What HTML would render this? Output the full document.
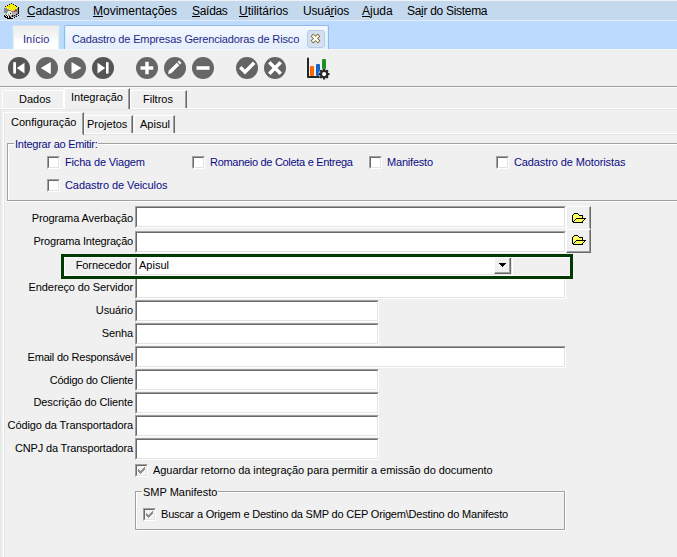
<!DOCTYPE html>
<html><head><meta charset="utf-8">
<style>
html,body{margin:0;padding:0}
body{width:677px;height:557px;overflow:hidden;position:relative;background:#f0f0f0;font-family:"Liberation Sans",sans-serif;font-size:11px;color:#000}
.a{position:absolute}
.t{position:absolute;white-space:nowrap;font-size:11px;line-height:13px}
.m{position:absolute;white-space:nowrap;font-size:12px;line-height:14px;top:4px}
.m u{text-decoration:none;border-bottom:1px solid #000;display:inline-block;line-height:10px}
.lbl{position:absolute;white-space:nowrap;font-size:11px;line-height:13px;right:544px;text-align:right;letter-spacing:-0.1px}
.fld{position:absolute;left:135px;height:22px;background:#fff;box-sizing:border-box;border-top:1px solid #a0a0a0;border-left:1px solid #a0a0a0;border-right:1px solid #fff;border-bottom:1px solid #fff}
.fld:before{content:"";position:absolute;left:0;top:0;right:0;bottom:0;border-top:1px solid #696969;border-left:1px solid #696969;border-right:1px solid #e3e3e3;border-bottom:1px solid #e3e3e3}
.cb{position:absolute;width:13px;height:13px;box-sizing:border-box;background:#fff;border-top:1px solid #a0a0a0;border-left:1px solid #a0a0a0;border-right:1px solid #fff;border-bottom:1px solid #fff}
.cb:before{content:"";position:absolute;left:0;top:0;right:0;bottom:0;border-top:1px solid #696969;border-left:1px solid #696969;border-right:1px solid #e3e3e3;border-bottom:1px solid #e3e3e3}
.circ{position:absolute;top:57px;width:22px;height:22px;border-radius:50%;background:#5c5c5c}
.circ svg{position:absolute;left:0;top:0}
.blue{color:#0c0c84}
</style></head><body>

<!-- menu bar -->
<div class="a" style="left:0;top:0;width:677px;height:1px;background:#eef2f6"></div>
<div class="a" style="left:0;top:1px;width:677px;height:19px;background:#c5d9ee"></div>
<div class="a" style="left:0;top:20px;width:677px;height:1px;background:#e4eaf2"></div>
<div class="m" style="left:27px;letter-spacing:-0.2px"><u>C</u>adastros</div>
<div class="m" style="left:93px"><u>M</u>ovimentações</div>
<div class="m" style="left:192px;letter-spacing:-0.3px"><u>S</u>aídas</div>
<div class="m" style="left:239px"><u>U</u>tilitários</div>
<div class="m" style="left:303px;letter-spacing:-0.15px">Usuá<u>r</u>ios</div>
<div class="m" style="left:362px"><u>A</u>juda</div>
<div class="m" style="left:407px;letter-spacing:-0.3px">Sa<u>i</u>r do Sistema</div>


<!-- app icon -->
<svg class="a" style="left:3px;top:2px" width="18" height="18" viewBox="0 0 18 18" shape-rendering="crispEdges"><rect x="8" y="1" width="1" height="1" fill="#000"/><rect x="6" y="2" width="1" height="1" fill="#000"/><rect x="7" y="2" width="3" height="1" fill="#f4f000"/><rect x="10" y="2" width="1" height="1" fill="#000"/><rect x="4" y="3" width="1" height="1" fill="#000"/><rect x="5" y="3" width="7" height="1" fill="#f4f000"/><rect x="12" y="3" width="1" height="1" fill="#000"/><rect x="2" y="4" width="1" height="1" fill="#000"/><rect x="3" y="4" width="3" height="1" fill="#f4f000"/><rect x="6" y="4" width="1" height="1" fill="#a0a0a0"/><rect x="7" y="4" width="6" height="1" fill="#f4f000"/><rect x="13" y="4" width="1" height="1" fill="#000"/><rect x="1" y="5" width="1" height="1" fill="#e8e8e8"/><rect x="2" y="5" width="13" height="1" fill="#f4f000"/><rect x="15" y="5" width="1" height="1" fill="#000"/><rect x="1" y="6" width="3" height="1" fill="#8a8a8a"/><rect x="4" y="6" width="1" height="1" fill="#e8e8e8"/><rect x="5" y="6" width="9" height="1" fill="#f4f000"/><rect x="14" y="6" width="1" height="1" fill="#8a8a8a"/><rect x="15" y="6" width="1" height="1" fill="#000"/><rect x="1" y="7" width="5" height="1" fill="#8a8a8a"/><rect x="6" y="7" width="2" height="1" fill="#f4f000"/><rect x="8" y="7" width="1" height="1" fill="#d0d0c0"/><rect x="9" y="7" width="3" height="1" fill="#f4f000"/><rect x="12" y="7" width="3" height="1" fill="#8a8a8a"/><rect x="15" y="7" width="1" height="1" fill="#000"/><rect x="1" y="8" width="7" height="1" fill="#8a8a8a"/><rect x="8" y="8" width="3" height="1" fill="#f4f000"/><rect x="11" y="8" width="1" height="1" fill="#8a8a8a"/><rect x="12" y="8" width="2" height="1" fill="#f01010"/><rect x="14" y="8" width="1" height="1" fill="#8a8a8a"/><rect x="15" y="8" width="1" height="1" fill="#000"/><rect x="1" y="9" width="4" height="1" fill="#8a8a8a"/><rect x="5" y="9" width="3" height="1" fill="#e8e8e8"/><rect x="8" y="9" width="3" height="1" fill="#8a8a8a"/><rect x="11" y="9" width="1" height="1" fill="#f01010"/><rect x="12" y="9" width="3" height="1" fill="#8a8a8a"/><rect x="15" y="9" width="1" height="1" fill="#000"/><rect x="1" y="10" width="3" height="1" fill="#8a8a8a"/><rect x="4" y="10" width="5" height="1" fill="#e8e8e8"/><rect x="9" y="10" width="1" height="1" fill="#8a8a8a"/><rect x="10" y="10" width="4" height="1" fill="#b4b4b4"/><rect x="14" y="10" width="1" height="1" fill="#8a8a8a"/><rect x="15" y="10" width="1" height="1" fill="#000"/><rect x="1" y="11" width="2" height="1" fill="#e8e8e8"/><rect x="3" y="11" width="1" height="1" fill="#10e010"/><rect x="4" y="11" width="3" height="1" fill="#e8e8e8"/><rect x="7" y="11" width="1" height="1" fill="#000"/><rect x="8" y="11" width="1" height="1" fill="#e8e8e8"/><rect x="9" y="11" width="4" height="1" fill="#b4b4b4"/><rect x="13" y="11" width="2" height="1" fill="#8a8a8a"/><rect x="15" y="11" width="1" height="1" fill="#000"/><rect x="1" y="12" width="1" height="1" fill="#e8e8e8"/><rect x="2" y="12" width="1" height="1" fill="#8a8a8a"/><rect x="3" y="12" width="2" height="1" fill="#e8e8e8"/><rect x="5" y="12" width="1" height="1" fill="#8a8a8a"/><rect x="6" y="12" width="3" height="1" fill="#e8e8e8"/><rect x="9" y="12" width="4" height="1" fill="#b4b4b4"/><rect x="13" y="12" width="1" height="1" fill="#000"/><rect x="14" y="12" width="1" height="1" fill="#8a8a8a"/><rect x="1" y="13" width="1" height="1" fill="#000"/><rect x="2" y="13" width="1" height="1" fill="#e8e8e8"/><rect x="3" y="13" width="1" height="1" fill="#000"/><rect x="4" y="13" width="1" height="1" fill="#e8e8e8"/><rect x="5" y="13" width="2" height="1" fill="#8a8a8a"/><rect x="7" y="13" width="1" height="1" fill="#e8e8e8"/><rect x="8" y="13" width="1" height="1" fill="#8a8a8a"/><rect x="9" y="13" width="1" height="1" fill="#000"/><rect x="10" y="13" width="1" height="1" fill="#8a8a8a"/><rect x="11" y="13" width="1" height="1" fill="#000"/><rect x="12" y="13" width="2" height="1" fill="#8a8a8a"/><rect x="15" y="13" width="1" height="1" fill="#000"/><rect x="1" y="14" width="2" height="1" fill="#000"/><rect x="3" y="14" width="1" height="1" fill="#e8e8e8"/><rect x="4" y="14" width="1" height="1" fill="#000"/><rect x="5" y="14" width="1" height="1" fill="#e8e8e8"/><rect x="6" y="14" width="1" height="1" fill="#000"/><rect x="7" y="14" width="2" height="1" fill="#8a8a8a"/><rect x="9" y="14" width="1" height="1" fill="#000"/><rect x="10" y="14" width="3" height="1" fill="#8a8a8a"/><rect x="13" y="14" width="1" height="1" fill="#000"/><rect x="2" y="15" width="3" height="1" fill="#000"/><rect x="5" y="15" width="1" height="1" fill="#e8e8e8"/><rect x="6" y="15" width="2" height="1" fill="#000"/><rect x="11" y="15" width="1" height="1" fill="#000"/><rect x="4" y="16" width="6" height="1" fill="#000"/></svg>
<!-- tab strip -->
<div class="a" style="left:0;top:21px;width:677px;height:28px;background:#bcdafe"></div>
<div class="a" style="left:0;top:49px;width:677px;height:1px;background:#f6f6f6"></div>


<!-- document tabs -->
<div class="a" style="left:12px;top:25px;width:48px;height:24px;box-sizing:border-box;border:1px solid #d6dde6;border-bottom:none;border-radius:2px 2px 0 0;background:linear-gradient(#eeeeee,#f6f6f6 50%,#ffffff 62%)"></div>
<div class="a" style="left:13px;top:27px;width:1px;height:22px;background:#c8f4ff"></div>
<div class="a" style="left:58px;top:27px;width:1px;height:22px;background:#c8f4ff"></div>
<div class="t" style="left:23px;top:33px;color:#1e2a88">Início</div>
<div class="a" style="left:64px;top:25px;width:265px;height:24px;box-sizing:border-box;border:1px solid #90b8ea;border-bottom:none;border-radius:2px 2px 0 0;background:linear-gradient(#f4f8fe,#e4eefc)"></div>
<div class="a" style="left:65px;top:27px;width:1px;height:22px;background:#d0f4ff"></div>
<div class="a" style="left:327px;top:27px;width:1px;height:22px;background:#d0f4ff"></div>
<div class="t" style="left:72px;top:33px;color:#1e2a88;letter-spacing:-0.15px">Cadastro de Empresas Gerenciadoras de Risco</div>
<div class="a" style="left:307px;top:30px;width:18px;height:18px;box-sizing:border-box;border:1px solid #b6cce6;border-radius:3px;background:#d2e0f2"></div>
<svg class="a" style="left:307px;top:30px" width="18" height="18" viewBox="0 0 18 18">
<path d="M6.3,6.3 L10.7,10.7 M10.7,6.3 L6.3,10.7" stroke="#7a6a30" stroke-width="3.8" stroke-linecap="square"/>
<path d="M6.3,6.3 L10.7,10.7 M10.7,6.3 L6.3,10.7" stroke="#ffffff" stroke-width="2.2" stroke-linecap="square"/>
</svg>
<!-- toolbar -->
<div class="a" style="left:0;top:86px;width:677px;height:1px;background:#a0a0a0"></div>
<div class="a" style="left:0;top:87px;width:677px;height:1px;background:#fcfcfc"></div>


<!-- toolbar icons -->
<svg class="a" style="left:8px;top:57px" width="22" height="22" viewBox="0 0 22 22"><circle cx="11" cy="11" r="11" fill="#555"/><rect x="5.2" y="5.2" width="2.8" height="11.4" fill="#fff"/><polygon points="8.8,11 16.5,5.8 16.5,16.4" fill="#fff"/></svg>
<svg class="a" style="left:36px;top:57px" width="22" height="22" viewBox="0 0 22 22"><circle cx="11" cy="11" r="11" fill="#666"/><polygon points="4.8,11 14.8,5 14.8,17.2" fill="#fff"/></svg>
<svg class="a" style="left:64px;top:57px" width="22" height="22" viewBox="0 0 22 22"><circle cx="11" cy="11" r="11" fill="#666"/><polygon points="17.5,11 7.5,5 7.5,17" fill="#fff"/></svg>
<svg class="a" style="left:92px;top:57px" width="22" height="22" viewBox="0 0 22 22"><circle cx="11" cy="11" r="11" fill="#555"/><rect x="14" y="5.2" width="2.6" height="11.4" fill="#fff"/><polygon points="13.2,11 5.5,5.8 5.5,16.4" fill="#fff"/></svg>
<svg class="a" style="left:136px;top:57px" width="22" height="22" viewBox="0 0 22 22"><circle cx="11" cy="11" r="11" fill="#666"/><rect x="4.5" y="9.3" width="12.8" height="3.4" fill="#fff"/><rect x="9.3" y="4.8" width="3.4" height="12.4" fill="#fff"/></svg>
<svg class="a" style="left:164px;top:57px" width="22" height="22" viewBox="0 0 22 22"><circle cx="11" cy="11" r="11" fill="#666"/><polygon points="4.1,16.9 4.73,13.73 12.83,5.63 15.37,8.17 7.27,16.27" fill="#fff"/><polygon points="13.5,5 15,3.5 17.5,6 16,7.5" fill="#fff"/></svg>
<svg class="a" style="left:192px;top:57px" width="22" height="22" viewBox="0 0 22 22"><circle cx="11" cy="11" r="11" fill="#666"/><rect x="4.5" y="9.2" width="13" height="3.6" fill="#fff"/></svg>
<svg class="a" style="left:236px;top:57px" width="22" height="22" viewBox="0 0 22 22"><circle cx="11" cy="11" r="11" fill="#646464"/><polyline points="5.5,11.5 9,15 17,7" fill="none" stroke="#fff" stroke-width="3.4" stroke-linecap="square"/></svg>
<svg class="a" style="left:264px;top:57px" width="22" height="22" viewBox="0 0 22 22"><circle cx="11" cy="11" r="11" fill="#646464"/><path d="M6.5,6.5 L15.5,15.5 M15.5,6.5 L6.5,15.5" stroke="#fff" stroke-width="3.4" stroke-linecap="square"/></svg>
<svg class="a" style="left:304px;top:54px" width="32" height="30" viewBox="0 0 32 30">
<path d="M4,4.5 L4,23 L16,23" fill="none" stroke="#262626" stroke-width="2" stroke-linecap="round" stroke-linejoin="round"/>
<rect x="6" y="12" width="4" height="10" rx="1" fill="#ff6600"/>
<rect x="12" y="10" width="4" height="12" rx="1" fill="#1464c8"/>
<rect x="18" y="5" width="4" height="11" rx="1" fill="#209020"/>
<g transform="translate(20.1,20.1)"><circle r="5.8" fill="#f0f0f0" opacity="0.6"/><circle r="4.1" fill="#262626"/><g stroke="#262626" stroke-width="2.2"><path d="M0,-5.4 V5.4 M-5.4,0 H5.4 M-3.8,-3.8 L3.8,3.8 M3.8,-3.8 L-3.8,3.8"/></g><circle r="2.1" fill="#fff"/></g>
</svg>

<!-- tab rows -->
<div class="a" style="left:0;top:88px;width:677px;height:469px;background:#f0f0f0"></div>
<div class="a" style="left:0px;top:109px;width:1px;height:448px;background:#e3e3e3"></div>
<div class="a" style="left:0px;top:108px;width:677px;height:1px;background:#fff"></div>
<div class="a" style="left:1px;top:109px;width:676px;height:1px;background:#e6e6e6"></div>
<!-- Dados -->
<div class="a" style="left:2px;top:90px;width:62px;height:18px;box-sizing:border-box;border-left:1px solid #fff;border-top:1px solid #fff;border-right:1px solid #fff"></div>
<div class="t" style="left:19px;top:93px">Dados</div>
<!-- Integracao selected -->
<div class="a" style="left:64px;top:88px;width:66px;height:21px;background:#f0f0f0;box-sizing:border-box;border-left:1px solid #fff;border-top:1px solid #fff;border-right:1px solid #696969"></div>
<div class="a" style="left:128px;top:89px;width:1px;height:20px;background:#a0a0a0"></div>
<div class="t" style="left:71px;top:91px">Integração</div>
<!-- Filtros -->
<div class="a" style="left:130px;top:90px;width:57px;height:18px;box-sizing:border-box;border-left:1px solid #fff;border-top:1px solid #fff;border-right:1px solid #696969"></div>
<div class="a" style="left:185px;top:91px;width:1px;height:17px;background:#a0a0a0"></div>
<div class="t" style="left:143px;top:93px">Filtros</div>

<!-- inner page -->
<div class="a" style="left:3px;top:133px;width:674px;height:1px;background:#fff"></div>
<div class="a" style="left:3px;top:133px;width:1px;height:424px;background:#fff"></div>
<div class="a" style="left:4px;top:134px;width:673px;height:1px;background:#e3e3e3"></div>
<!-- Configuracao selected -->
<div class="a" style="left:3px;top:112px;width:81px;height:23px;background:#f0f0f0;box-sizing:border-box;border-left:1px solid #fff;border-top:1px solid #fff;border-right:1px solid #696969"></div>
<div class="a" style="left:82px;top:113px;width:1px;height:21px;background:#a0a0a0"></div>
<div class="t" style="left:11px;top:116px">Configuração</div>
<div class="a" style="left:4px;top:114px;width:1px;height:443px;background:#e6e6e6"></div>
<!-- Projetos -->
<div class="a" style="left:84px;top:115px;width:49px;height:18px;box-sizing:border-box;border-left:1px solid #fff;border-top:1px solid #fff;border-right:1px solid #696969"></div>
<div class="a" style="left:131px;top:116px;width:1px;height:17px;background:#a0a0a0"></div>
<div class="t" style="left:87px;top:118px">Projetos</div>
<!-- Apisul -->
<div class="a" style="left:134px;top:115px;width:41px;height:18px;box-sizing:border-box;border-left:1px solid #fff;border-top:1px solid #fff;border-right:1px solid #696969"></div>
<div class="a" style="left:173px;top:116px;width:1px;height:17px;background:#a0a0a0"></div>
<div class="t" style="left:140px;top:118px">Apisul</div>

<!-- group box 1 -->
<div class="a" style="left:7px;top:143px;width:670px;height:58px;box-sizing:border-box;border-left:1px solid #a0a0a0;border-top:1px solid #a0a0a0;border-bottom:1px solid #a0a0a0"></div>
<div class="a" style="left:8px;top:144px;width:669px;height:1px;background:#fff"></div>
<div class="a" style="left:8px;top:144px;width:1px;height:56px;background:#fff"></div>
<div class="a" style="left:7px;top:201px;width:670px;height:1px;background:#fff"></div>
<div class="t blue" style="left:14px;top:138px;background:#f0f0f0;padding:0 1px;letter-spacing:-0.26px">Integrar ao Emitir:</div>
<div class="cb" style="left:47px;top:156px"></div>
<div class="t blue" style="left:65px;top:156px;letter-spacing:-0.17px">Ficha de Viagem</div>
<div class="cb" style="left:192px;top:156px"></div>
<div class="t blue" style="left:210px;top:156px;letter-spacing:-0.3px">Romaneio de Coleta e Entrega</div>
<div class="cb" style="left:369px;top:156px"></div>
<div class="t blue" style="left:387px;top:156px;letter-spacing:-0.2px">Manifesto</div>
<div class="cb" style="left:496px;top:156px"></div>
<div class="t blue" style="left:514px;top:156px;letter-spacing:-0.11px">Cadastro de Motoristas</div>
<div class="cb" style="left:47px;top:179px"></div>
<div class="t blue" style="left:65px;top:179px;letter-spacing:-0.08px">Cadastro de Veiculos</div>
<!-- labels -->
<div class="lbl" style="top:212px">Programa Averbação</div>
<div class="lbl" style="top:235px;letter-spacing:-0.2px">Programa Integração</div>
<div class="lbl" style="top:259px;right:546px">Fornecedor</div>
<div class="lbl" style="top:281px">Endereço do Servidor</div>
<div class="lbl" style="top:304px">Usuário</div>
<div class="lbl" style="top:327px">Senha</div>
<div class="lbl" style="top:351px;letter-spacing:-0.2px">Email do Responsável</div>
<div class="lbl" style="top:374px;letter-spacing:-0.25px">Código do Cliente</div>
<div class="lbl" style="top:396px">Descrição do Cliente</div>
<div class="lbl" style="top:419px">Código da Transportadora</div>
<div class="lbl" style="top:442px;letter-spacing:-0.17px">CNPJ da Transportadora</div>

<!-- fields -->
<div class="fld" style="top:206px;width:431px"></div>
<div class="fld" style="top:231px;width:431px"></div>
<div class="fld" style="top:277px;width:431px"></div>
<div class="fld" style="top:300px;width:244px"></div>
<div class="fld" style="top:323px;width:244px"></div>
<div class="fld" style="top:346px;width:431px"></div>
<div class="fld" style="top:369px;width:244px"></div>
<div class="fld" style="top:392px;width:244px"></div>
<div class="fld" style="top:415px;width:244px"></div>
<div class="fld" style="top:438px;width:244px"></div>


<!-- combo fornecedor -->
<div class="fld" style="top:254px;width:378px;height:22px"></div>
<div class="t" style="left:139px;top:259px">Apisul</div>
<div class="a" style="left:494px;top:257px;width:17px;height:17px;box-sizing:border-box;background:#f0f0f0;border-left:1px solid #fff;border-top:1px solid #fff;border-right:1px solid #696969;border-bottom:1px solid #696969"></div>
<div class="a" style="left:509px;top:258px;width:1px;height:15px;background:#a0a0a0"></div>
<div class="a" style="left:495px;top:272px;width:15px;height:1px;background:#a0a0a0"></div>
<svg class="a" style="left:499px;top:263px" width="7" height="4" viewBox="0 0 7 4" shape-rendering="crispEdges"><rect x="0" y="0" width="7" height="1" fill="#000"/><rect x="1" y="1" width="5" height="1" fill="#000"/><rect x="2" y="2" width="3" height="1" fill="#000"/><rect x="3" y="3" width="1" height="1" fill="#000"/></svg>
<div class="a" style="left:61px;top:254px;width:512px;height:25px;box-sizing:border-box;border:3px solid #003a00"></div>
<div class="a" style="left:64px;top:257px;width:506px;height:19px;box-sizing:border-box;border:1px solid #fff;border-right:none;border-left-color:#fafafa"></div>

<!-- folder buttons -->
<div class="a" style="left:566px;top:206px;width:25px;height:23px;box-sizing:border-box;background:#f0f0f0;border-left:1px solid #fff;border-top:1px solid #fff;border-right:1px solid #696969"></div>
<div class="a" style="left:589px;top:207px;width:1px;height:21px;background:#a0a0a0"></div>

<div class="a" style="left:566px;top:229px;width:25px;height:24px;box-sizing:border-box;background:#f0f0f0;border-left:1px solid #fff;border-top:1px solid #fff;border-right:1px solid #696969;border-bottom:1px solid #696969"></div>
<div class="a" style="left:589px;top:230px;width:1px;height:22px;background:#a0a0a0"></div>
<div class="a" style="left:567px;top:251px;width:23px;height:1px;background:#a0a0a0"></div>
<svg class="a" style="left:572px;top:213px" width="14" height="10" viewBox="0 0 14 10" shape-rendering="crispEdges"><rect x="2" y="0" width="4" height="1" fill="#000"/><rect x="1" y="1" width="1" height="1" fill="#000"/><rect x="2" y="1" width="1" height="1" fill="#ffff00"/><rect x="3" y="1" width="1" height="1" fill="#ffffc0"/><rect x="4" y="1" width="1" height="1" fill="#ffff00"/><rect x="5" y="1" width="1" height="1" fill="#ffffc0"/><rect x="6" y="1" width="1" height="1" fill="#000"/><rect x="0" y="2" width="1" height="1" fill="#000"/><rect x="1" y="2" width="1" height="1" fill="#ffff00"/><rect x="2" y="2" width="1" height="1" fill="#ffffc0"/><rect x="3" y="2" width="1" height="1" fill="#ffff00"/><rect x="4" y="2" width="1" height="1" fill="#ffffc0"/><rect x="5" y="2" width="1" height="1" fill="#ffff00"/><rect x="6" y="2" width="1" height="1" fill="#ffffc0"/><rect x="7" y="2" width="4" height="1" fill="#000"/><rect x="0" y="3" width="1" height="1" fill="#000"/><rect x="1" y="3" width="1" height="1" fill="#ffffc0"/><rect x="2" y="3" width="1" height="1" fill="#ffff00"/><rect x="3" y="3" width="1" height="1" fill="#ffffc0"/><rect x="4" y="3" width="1" height="1" fill="#ffff00"/><rect x="5" y="3" width="1" height="1" fill="#ffffc0"/><rect x="6" y="3" width="1" height="1" fill="#ffff00"/><rect x="7" y="3" width="1" height="1" fill="#ffffc0"/><rect x="8" y="3" width="1" height="1" fill="#ffff00"/><rect x="9" y="3" width="1" height="1" fill="#ffffc0"/><rect x="10" y="3" width="1" height="1" fill="#000"/><rect x="0" y="4" width="1" height="1" fill="#000"/><rect x="1" y="4" width="1" height="1" fill="#ffff00"/><rect x="2" y="4" width="1" height="1" fill="#ffffc0"/><rect x="3" y="4" width="1" height="1" fill="#ffff00"/><rect x="4" y="4" width="1" height="1" fill="#ffffc0"/><rect x="5" y="4" width="1" height="1" fill="#ffff00"/><rect x="6" y="4" width="1" height="1" fill="#ffffc0"/><rect x="7" y="4" width="1" height="1" fill="#ffff00"/><rect x="8" y="4" width="1" height="1" fill="#ffffc0"/><rect x="9" y="4" width="1" height="1" fill="#ffff00"/><rect x="10" y="4" width="1" height="1" fill="#000"/><rect x="0" y="5" width="1" height="1" fill="#000"/><rect x="1" y="5" width="1" height="1" fill="#ffffc0"/><rect x="2" y="5" width="1" height="1" fill="#ffff00"/><rect x="3" y="5" width="1" height="1" fill="#ffffc0"/><rect x="4" y="5" width="10" height="1" fill="#000"/><rect x="0" y="6" width="1" height="1" fill="#000"/><rect x="1" y="6" width="1" height="1" fill="#ffff00"/><rect x="2" y="6" width="1" height="1" fill="#ffffc0"/><rect x="3" y="6" width="1" height="1" fill="#000"/><rect x="4" y="6" width="1" height="1" fill="#ffff00"/><rect x="5" y="6" width="1" height="1" fill="#ffffc0"/><rect x="6" y="6" width="1" height="1" fill="#ffff00"/><rect x="7" y="6" width="1" height="1" fill="#ffffc0"/><rect x="8" y="6" width="1" height="1" fill="#ffff00"/><rect x="9" y="6" width="1" height="1" fill="#ffffc0"/><rect x="10" y="6" width="1" height="1" fill="#ffff00"/><rect x="11" y="6" width="1" height="1" fill="#ffffc0"/><rect x="12" y="6" width="1" height="1" fill="#000"/><rect x="0" y="7" width="1" height="1" fill="#000"/><rect x="1" y="7" width="1" height="1" fill="#ffffc0"/><rect x="2" y="7" width="1" height="1" fill="#000"/><rect x="3" y="7" width="1" height="1" fill="#ffffc0"/><rect x="4" y="7" width="1" height="1" fill="#ffff00"/><rect x="5" y="7" width="1" height="1" fill="#ffffc0"/><rect x="6" y="7" width="1" height="1" fill="#ffff00"/><rect x="7" y="7" width="1" height="1" fill="#ffffc0"/><rect x="8" y="7" width="1" height="1" fill="#ffff00"/><rect x="9" y="7" width="1" height="1" fill="#ffffc0"/><rect x="10" y="7" width="1" height="1" fill="#ffff00"/><rect x="11" y="7" width="1" height="1" fill="#000"/><rect x="0" y="8" width="2" height="1" fill="#000"/><rect x="2" y="8" width="1" height="1" fill="#ffffc0"/><rect x="3" y="8" width="1" height="1" fill="#ffff00"/><rect x="4" y="8" width="1" height="1" fill="#ffffc0"/><rect x="5" y="8" width="1" height="1" fill="#ffff00"/><rect x="6" y="8" width="1" height="1" fill="#ffffc0"/><rect x="7" y="8" width="1" height="1" fill="#ffff00"/><rect x="8" y="8" width="1" height="1" fill="#ffffc0"/><rect x="9" y="8" width="1" height="1" fill="#ffff00"/><rect x="10" y="8" width="1" height="1" fill="#000"/><rect x="1" y="9" width="10" height="1" fill="#000"/></svg>
<svg class="a" style="left:572px;top:235px" width="14" height="10" viewBox="0 0 14 10" shape-rendering="crispEdges"><rect x="2" y="0" width="4" height="1" fill="#000"/><rect x="1" y="1" width="1" height="1" fill="#000"/><rect x="2" y="1" width="1" height="1" fill="#ffff00"/><rect x="3" y="1" width="1" height="1" fill="#ffffc0"/><rect x="4" y="1" width="1" height="1" fill="#ffff00"/><rect x="5" y="1" width="1" height="1" fill="#ffffc0"/><rect x="6" y="1" width="1" height="1" fill="#000"/><rect x="0" y="2" width="1" height="1" fill="#000"/><rect x="1" y="2" width="1" height="1" fill="#ffff00"/><rect x="2" y="2" width="1" height="1" fill="#ffffc0"/><rect x="3" y="2" width="1" height="1" fill="#ffff00"/><rect x="4" y="2" width="1" height="1" fill="#ffffc0"/><rect x="5" y="2" width="1" height="1" fill="#ffff00"/><rect x="6" y="2" width="1" height="1" fill="#ffffc0"/><rect x="7" y="2" width="4" height="1" fill="#000"/><rect x="0" y="3" width="1" height="1" fill="#000"/><rect x="1" y="3" width="1" height="1" fill="#ffffc0"/><rect x="2" y="3" width="1" height="1" fill="#ffff00"/><rect x="3" y="3" width="1" height="1" fill="#ffffc0"/><rect x="4" y="3" width="1" height="1" fill="#ffff00"/><rect x="5" y="3" width="1" height="1" fill="#ffffc0"/><rect x="6" y="3" width="1" height="1" fill="#ffff00"/><rect x="7" y="3" width="1" height="1" fill="#ffffc0"/><rect x="8" y="3" width="1" height="1" fill="#ffff00"/><rect x="9" y="3" width="1" height="1" fill="#ffffc0"/><rect x="10" y="3" width="1" height="1" fill="#000"/><rect x="0" y="4" width="1" height="1" fill="#000"/><rect x="1" y="4" width="1" height="1" fill="#ffff00"/><rect x="2" y="4" width="1" height="1" fill="#ffffc0"/><rect x="3" y="4" width="1" height="1" fill="#ffff00"/><rect x="4" y="4" width="1" height="1" fill="#ffffc0"/><rect x="5" y="4" width="1" height="1" fill="#ffff00"/><rect x="6" y="4" width="1" height="1" fill="#ffffc0"/><rect x="7" y="4" width="1" height="1" fill="#ffff00"/><rect x="8" y="4" width="1" height="1" fill="#ffffc0"/><rect x="9" y="4" width="1" height="1" fill="#ffff00"/><rect x="10" y="4" width="1" height="1" fill="#000"/><rect x="0" y="5" width="1" height="1" fill="#000"/><rect x="1" y="5" width="1" height="1" fill="#ffffc0"/><rect x="2" y="5" width="1" height="1" fill="#ffff00"/><rect x="3" y="5" width="1" height="1" fill="#ffffc0"/><rect x="4" y="5" width="10" height="1" fill="#000"/><rect x="0" y="6" width="1" height="1" fill="#000"/><rect x="1" y="6" width="1" height="1" fill="#ffff00"/><rect x="2" y="6" width="1" height="1" fill="#ffffc0"/><rect x="3" y="6" width="1" height="1" fill="#000"/><rect x="4" y="6" width="1" height="1" fill="#ffff00"/><rect x="5" y="6" width="1" height="1" fill="#ffffc0"/><rect x="6" y="6" width="1" height="1" fill="#ffff00"/><rect x="7" y="6" width="1" height="1" fill="#ffffc0"/><rect x="8" y="6" width="1" height="1" fill="#ffff00"/><rect x="9" y="6" width="1" height="1" fill="#ffffc0"/><rect x="10" y="6" width="1" height="1" fill="#ffff00"/><rect x="11" y="6" width="1" height="1" fill="#ffffc0"/><rect x="12" y="6" width="1" height="1" fill="#000"/><rect x="0" y="7" width="1" height="1" fill="#000"/><rect x="1" y="7" width="1" height="1" fill="#ffffc0"/><rect x="2" y="7" width="1" height="1" fill="#000"/><rect x="3" y="7" width="1" height="1" fill="#ffffc0"/><rect x="4" y="7" width="1" height="1" fill="#ffff00"/><rect x="5" y="7" width="1" height="1" fill="#ffffc0"/><rect x="6" y="7" width="1" height="1" fill="#ffff00"/><rect x="7" y="7" width="1" height="1" fill="#ffffc0"/><rect x="8" y="7" width="1" height="1" fill="#ffff00"/><rect x="9" y="7" width="1" height="1" fill="#ffffc0"/><rect x="10" y="7" width="1" height="1" fill="#ffff00"/><rect x="11" y="7" width="1" height="1" fill="#000"/><rect x="0" y="8" width="2" height="1" fill="#000"/><rect x="2" y="8" width="1" height="1" fill="#ffffc0"/><rect x="3" y="8" width="1" height="1" fill="#ffff00"/><rect x="4" y="8" width="1" height="1" fill="#ffffc0"/><rect x="5" y="8" width="1" height="1" fill="#ffff00"/><rect x="6" y="8" width="1" height="1" fill="#ffffc0"/><rect x="7" y="8" width="1" height="1" fill="#ffff00"/><rect x="8" y="8" width="1" height="1" fill="#ffffc0"/><rect x="9" y="8" width="1" height="1" fill="#ffff00"/><rect x="10" y="8" width="1" height="1" fill="#000"/><rect x="1" y="9" width="10" height="1" fill="#000"/></svg>

<!-- bottom checkbox -->
<div class="cb" style="left:135px;top:464px;background:#f4f4f4"></div>
<svg class="a" style="left:138px;top:467px" width="7" height="7" viewBox="0 0 7 7" shape-rendering="crispEdges"><rect x="6" y="0" width="1" height="1" fill="#8d8d8d"/><rect x="5" y="1" width="2" height="1" fill="#8d8d8d"/><rect x="0" y="2" width="1" height="1" fill="#8d8d8d"/><rect x="4" y="2" width="3" height="1" fill="#8d8d8d"/><rect x="0" y="3" width="2" height="1" fill="#8d8d8d"/><rect x="3" y="3" width="3" height="1" fill="#8d8d8d"/><rect x="0" y="4" width="5" height="1" fill="#8d8d8d"/><rect x="1" y="5" width="3" height="1" fill="#8d8d8d"/><rect x="2" y="6" width="1" height="1" fill="#8d8d8d"/></svg>
<div class="t" style="left:153px;top:464px;letter-spacing:-0.06px">Aguardar retorno da integração para permitir a emissão do documento</div>

<!-- SMP group -->
<div class="a" style="left:135px;top:491px;width:430px;height:39px;box-sizing:border-box;border:1px solid #a0a0a0;border-right-color:#a0a0a0"></div>
<div class="a" style="left:136px;top:492px;width:428px;height:37px;box-sizing:border-box;border-left:1px solid #fff;border-top:1px solid #fff"></div>
<div class="a" style="left:135px;top:530px;width:431px;height:1px;background:#fff"></div>
<div class="a" style="left:565px;top:491px;width:1px;height:40px;background:#fff"></div>
<div class="t" style="left:142px;top:486px;background:#f0f0f0;padding:0 1px">SMP Manifesto</div>
<div class="cb" style="left:143px;top:508px;background:#f4f4f4"></div>
<svg class="a" style="left:146px;top:511px" width="7" height="7" viewBox="0 0 7 7" shape-rendering="crispEdges"><rect x="6" y="0" width="1" height="1" fill="#8d8d8d"/><rect x="5" y="1" width="2" height="1" fill="#8d8d8d"/><rect x="0" y="2" width="1" height="1" fill="#8d8d8d"/><rect x="4" y="2" width="3" height="1" fill="#8d8d8d"/><rect x="0" y="3" width="2" height="1" fill="#8d8d8d"/><rect x="3" y="3" width="3" height="1" fill="#8d8d8d"/><rect x="0" y="4" width="5" height="1" fill="#8d8d8d"/><rect x="1" y="5" width="3" height="1" fill="#8d8d8d"/><rect x="2" y="6" width="1" height="1" fill="#8d8d8d"/></svg>
<div class="t" style="left:161px;top:508px;letter-spacing:-0.2px">Buscar a Origem e Destino da SMP do CEP Origem\Destino do Manifesto</div>
</body></html>
